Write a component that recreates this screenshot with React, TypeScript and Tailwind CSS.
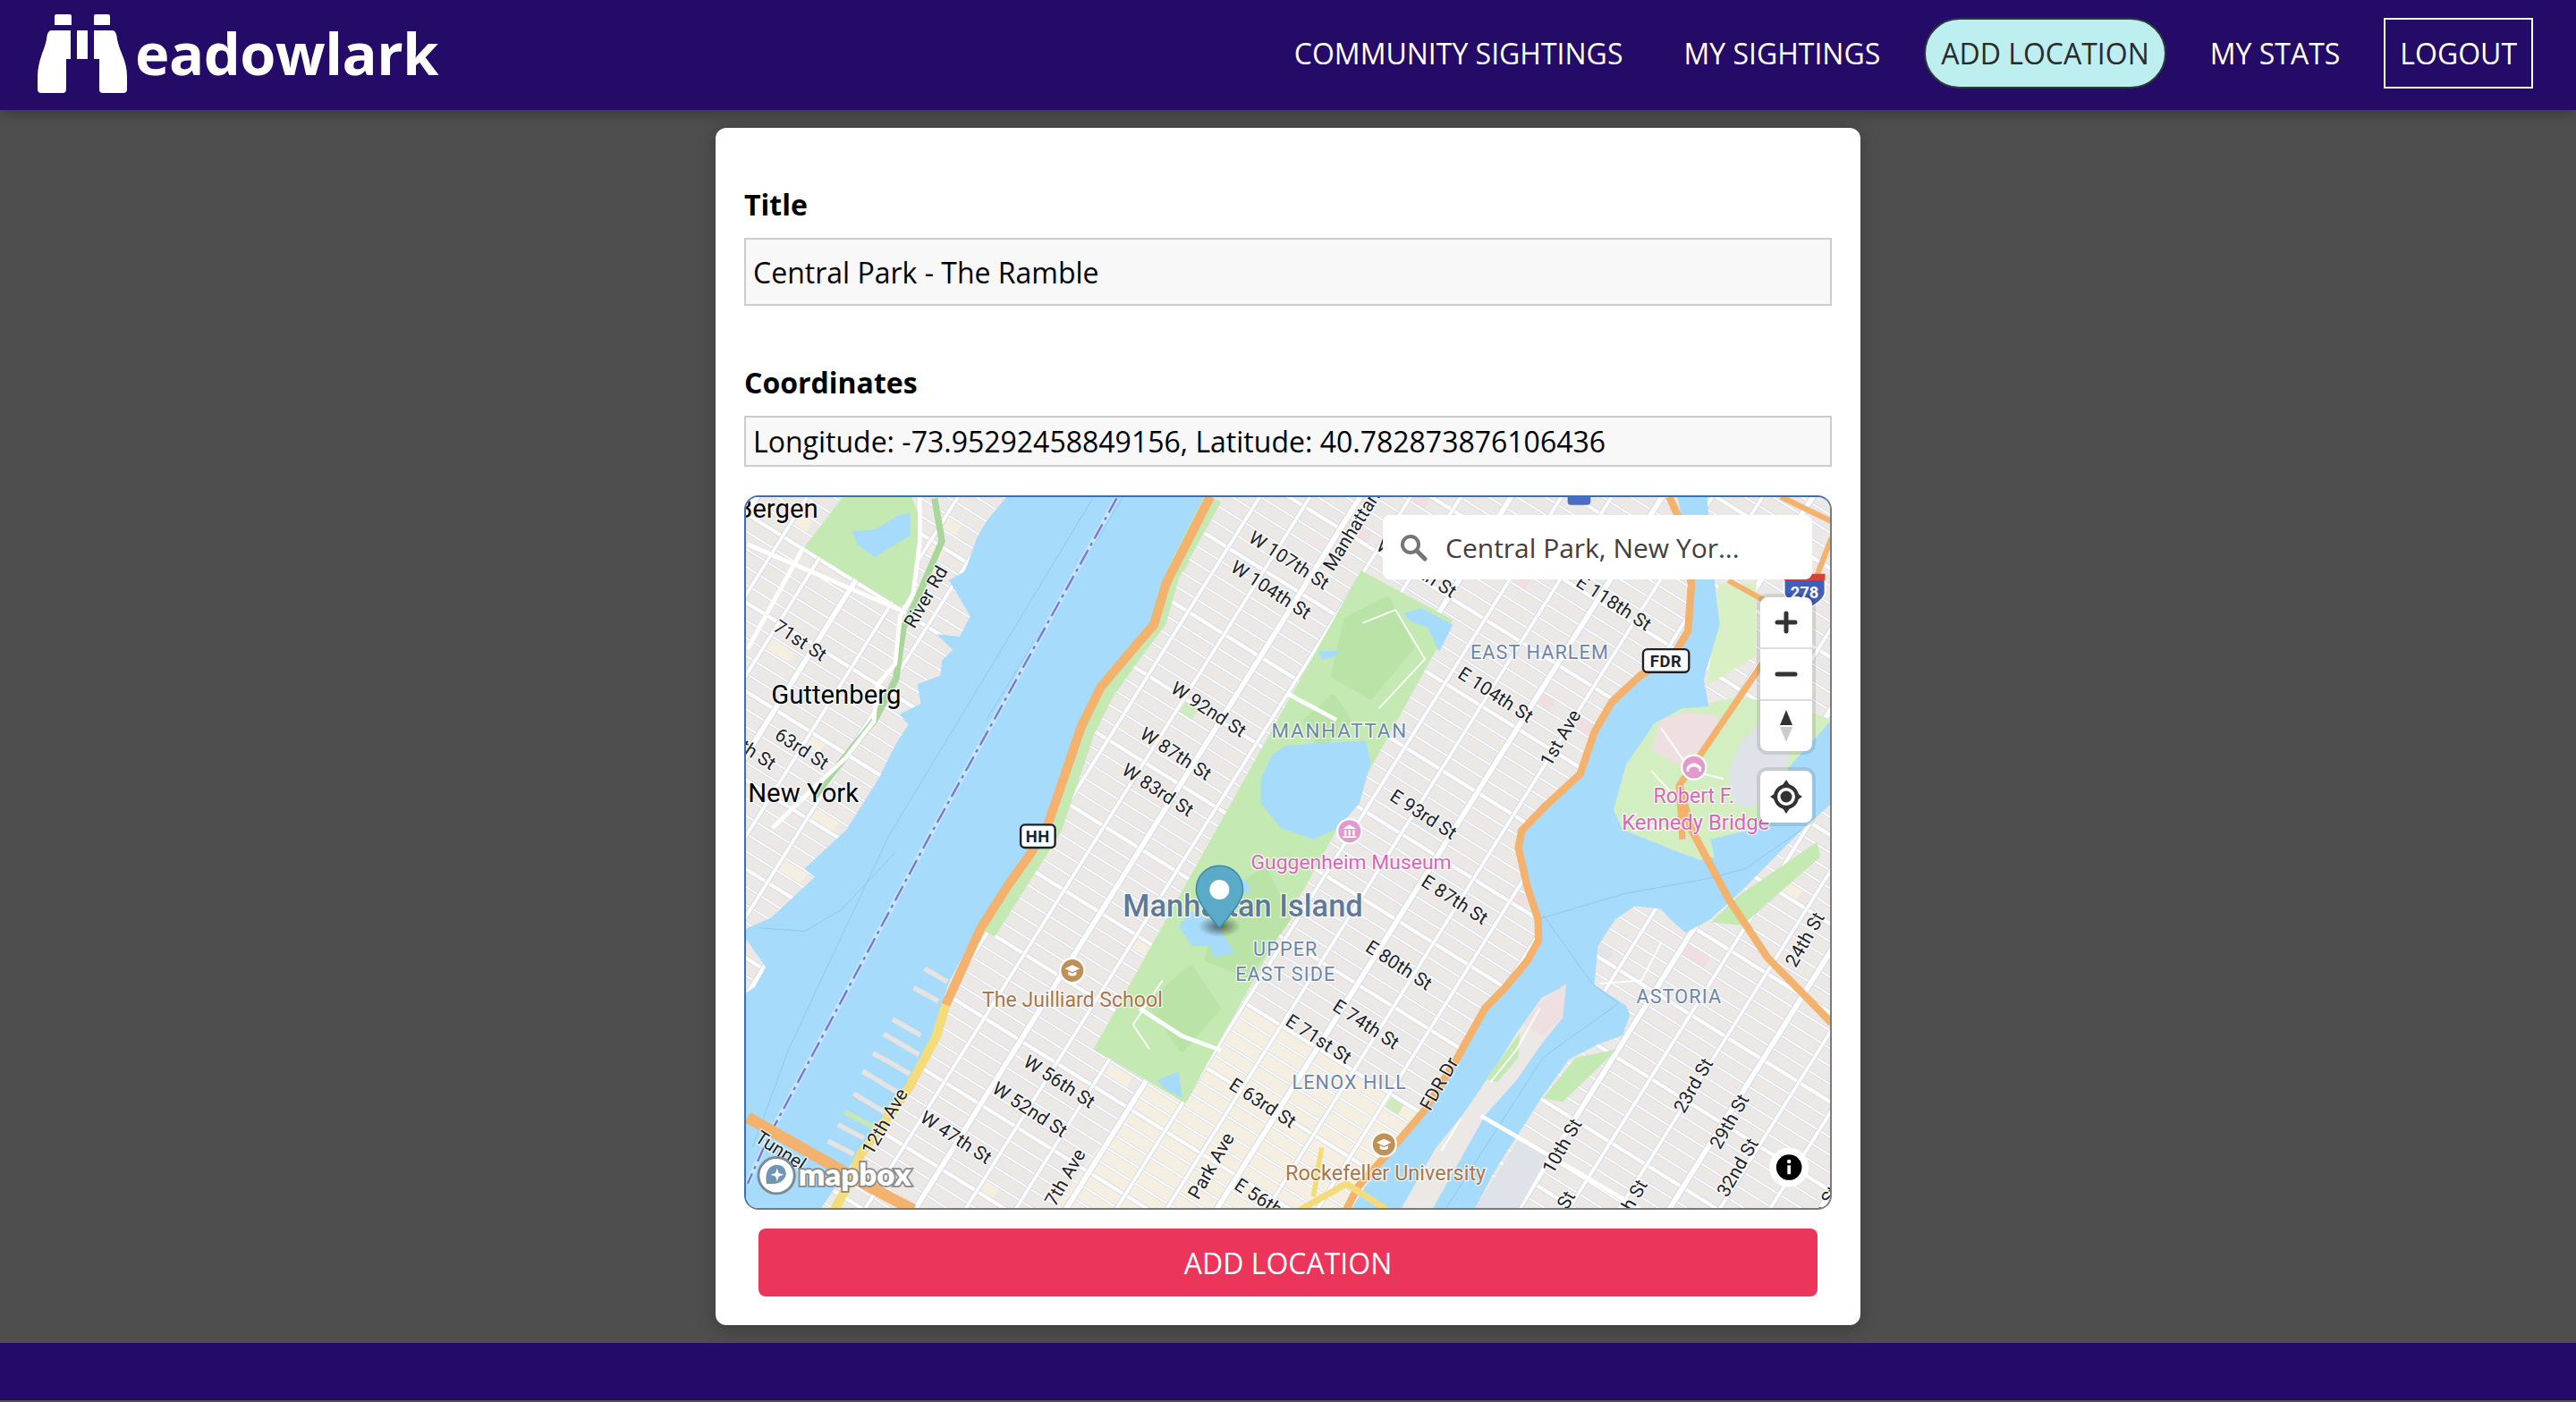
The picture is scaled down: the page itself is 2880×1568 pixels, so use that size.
import type { ReactNode } from "react";

const NAV_LINKS = [
  { label: "COMMUNITY SIGHTINGS", kind: "plain" },
  { label: "MY SIGHTINGS", kind: "plain" },
  { label: "ADD LOCATION", kind: "active" },
  { label: "MY STATS", kind: "plain" },
  { label: "LOGOUT", kind: "boxed" },
];

const HUDSON =
  "613,303 601.5,316.7 595,327.6 587.5,348.5 577.8,353.9 590.8,375.7 584.3,388.4 570.3,386.6 580,396.5 573.5,402.9 572.5,412 558.5,417.4 560.6,429.2 547.7,435.6 553,442 545.5,453.7 539,466.4 534.8,475.5 515.4,506 489.6,530 496,535 469,560 455,566 453,567 453,574 455,574 466,590 459.4,602 455,605 453,606 453,738 499,738 519.7,707.8 541.2,680.5 554,662.4 567,633 571.4,618.8 577.8,598.9 597.2,562.6 614.4,537 627.4,519 636,502.7 649,468.2 657.5,439 670.4,417.4 685.5,399.3 705,375.7 711.3,346.6 733,303";

const EAST_RIVER =
  "1022,303 1031.6,354 1029.5,385 1021,401 999.3,412 984,428.3 973.5,446.5 965,472 943,492 926,506 924,522.6 930.4,537 938,560.8 939,573.5 932.6,586 919.6,601.6 906.7,615 889.5,646 870,677 848.6,702.3 831.4,724 822.8,738 898,738 913,709.6 924,693.2 939,669.7 956,646 973.5,637 988.5,631.5 993,619 990.7,613.4 971.3,600.7 973.5,577 984,560.8 996,552.6 1012,554.4 1017.6,560.8 1027,569 1042,560.8 1061.7,542.6 1098,506 1116,490 1116,439 1089.7,468 1081,494 1064,506.7 1042,512 1044.5,522.6 1036,524.5 1021,519 988.5,506 983,493.7 990.7,466.4 1008,441 1025,432 1041,431 1038,414 1047.7,381 1044.5,354 1040,303";

const ROOSEVELT =
  "853,738 874.4,700.5 890.6,680.5 906.7,657 915.3,644 924,629.7 939,608.8 954,600.7 952,620.6 939,637 924,658.7 904.6,680.5 872.3,738";

const CENTRAL_PARK = "829,348 885,378 722,673 666,640";
const RESERVOIR = "783,455 805,453 832,452 835,465 828,490 815,505 800,512 780,505 768,490 768,475 775,460";
const PARK_PONDS = [
  "718,565 726,577 737,577 739,584 752,581 746,572 740,562 725,556",
  "705,659 717.7,653.3 720,670 709,664",
  "855,374 866,371 885,381 876.6,397.5 870,383 859,379",
  "803,397 816,397 812,401 805,402",
  "748,539 758,536 762,544 752,546",
];
const PARK_DARK = [
  "820,378 845,365 860,395 835,425 812,412",
  "795,440 812,425 822,440 805,455",
  "745,548 770,530 785,560 760,595 735,585",
  "700,612 725,590 742,615 720,640",
];
const GREENS = [
  { pts: "513,303 555,303 560.6,317.6 554,366.6 547.7,370 489.6,334", fill: "#c5e9b3" },
  { pts: "1047,356 1070,356 1070,400 1040,418 1044,385", fill: "#d8f0c4" },
  { pts: "1107,513.6 1109,522.6 1061.7,564.4 1042.4,562.6 1059.6,546", fill: "#c5e9b3" },
  { pts: "945,540 958,528 955,572 941,575", fill: "#c5e9b3" },
  { pts: "985,640 960,645 940,670 952,672 975,650", fill: "#c5e9b3" },
  { pts: "935,638 946,625 948,600 955,598 950,622 930,650", fill: "#c5e9b3" },
];

const WEST_SIDE_HWY = "737,303 710.2,355.7 702.7,381 685.5,401 670.4,419 658.5,443 650,468 638,503 627.4,520.8 614.4,539 597.2,566 575.7,613";
const HENRY_YELLOW = "575.7,613 570.3,631.5 554,662.4 541.2,680.5 524,704 515.4,724 508,738";
const FDR_HWY =
  "1017,303 1022,314 1030.5,356 1028.4,385 1018.7,401 999.3,412 982,428 971.3,446.5 962.7,472 941,492 927,506.6 925,517 930.4,540.8 937,560.8 937.3,573.5 930.4,586 917.5,601.6 904.6,615 887.3,646 868,677 846.4,702.3 827,724 820,738";
const RFK = "1023,479 1030.5,506 1053,548 1076.8,584 1116,624";
const RFK_UPPER = "1025,512 1023,479 1038,457.4 1072.5,406.5 1095,370";
const TOP_RIGHT_ROADS = ["1053,354 1072.5,365 1095,375", "1085,303 1116,318", "1116,328 1105,356"];
const WHITE_ROADS = [
  "560,303 560,330 556,362 548,376 545,405 534,418 532,440 515,462 494,482 470,505",
  "455,332 548,372",
  "489,334 468,372 455,396",
  "902,680.5 939,702 1000,738",
  "694,615 720,632 743.6,640.6",
  "784,423 814,439",
];
const THIN_ROADS = [
  "1012,444 1030,470 1050,475",
  "1006,470 1026,492",
  "990,500 1018,506",
  "938,615 924,640 908,660",
  "890,682 878,702",
  "708,598 690,625 700,640",
  "830,380 850,372 868,402 840,432",
  "975,600 1000,598 1012,575",
];

const PIERS = [
  "562.8,590.7 576.8,598.9",
  "556.3,602.5 571.4,610.7",
  "543.4,621.6 560.6,631.5",
  "538,630.6 559.5,643.3",
  "531.5,642.4 554,655",
  "525,653.3 547.7,667",
  "519.7,667 539,678.7",
  "510,686 526,694.2",
  "504,696 519.7,704",
];

type MapLabel = { t: string; x: number; y: number; r?: number; c?: string; s?: number; w?: number; ls?: number; a?: "start" | "end" };

const STREET_LABELS: MapLabel[] = [
  { t: "Bergen", x: 498, y: 316, s: 16, c: "#000", a: "end" },
  { t: "River Rd", x: 567, y: 366, r: -60 },
  { t: "71st St", x: 485, y: 394, r: 33 },
  { t: "Guttenberg", x: 509, y: 429, s: 16, c: "#000" },
  { t: "63rd St", x: 486, y: 460, r: 33 },
  { t: "67th St", x: 469, y: 470, r: 33, a: "end" },
  { t: "New York", x: 489, y: 489, s: 16, c: "#000" },
  { t: "W 107th St", x: 783, y: 345, r: 33 },
  { t: "W 104th St", x: 772, y: 363, r: 33 },
  { t: "Manhattan Ave", x: 812, y: 349, r: -58, a: "start" },
  { t: "W 116th St", x: 884, y: 365, r: 33, a: "end" },
  { t: "W 92nd St", x: 734, y: 436, r: 33 },
  { t: "W 87th St", x: 714, y: 463, r: 33 },
  { t: "W 83rd St", x: 703, y: 485, r: 33 },
  { t: "E 118th St", x: 981, y: 371, r: 33 },
  { t: "E 104th St", x: 909, y: 427, r: 33 },
  { t: "1st Ave", x: 954, y: 452, r: -60 },
  { t: "E 93rd St", x: 865, y: 500, r: 33 },
  { t: "E 87th St", x: 884, y: 552, r: 33 },
  { t: "E 80th St", x: 850, y: 592, r: 33 },
  { t: "E 74th St", x: 830, y: 628, r: 33 },
  { t: "E 71st St", x: 801, y: 637, r: 33 },
  { t: "W 56th St", x: 643, y: 663, r: 33 },
  { t: "W 52nd St", x: 625, y: 680, r: 33 },
  { t: "W 47th St", x: 580, y: 697, r: 33 },
  { t: "12th Ave", x: 542, y: 686, r: -60 },
  { t: "Tunnel", x: 473, y: 705, r: 33 },
  { t: "E 63rd St", x: 767, y: 676, r: 33 },
  { t: "Park Ave", x: 741, y: 713, r: -60 },
  { t: "7th Ave", x: 652, y: 720, r: -60 },
  { t: "E 56th St", x: 770, y: 737, r: 33 },
  { t: "FDR Dr", x: 880, y: 663, r: -60 },
  { t: "10th St", x: 955, y: 701, r: -60 },
  { t: "12th St", x: 951, y: 745, r: -60 },
  { t: "17th St", x: 995, y: 738, r: -60 },
  { t: "23rd St", x: 1035, y: 664, r: -60 },
  { t: "29th St", x: 1057, y: 686, r: -60 },
  { t: "32nd St", x: 1062, y: 714, r: -60 },
  { t: "24th St", x: 1103, y: 575, r: -60 },
  { t: "37th St", x: 1112, y: 742, r: -60 },
  { t: "The Juilliard School", x: 653, y: 614, c: "#a9774a", s: 12.6 },
  { t: "Rockefeller University", x: 844, y: 720, c: "#a9774a", s: 12.8 },
  { t: "Guggenheim Museum", x: 823, y: 530, c: "#d768b5", s: 12.5 },
  { t: "Robert F.", x: 1032, y: 490, c: "#d768b5", s: 12.6 },
  { t: "Kennedy Bridge", x: 1033, y: 506, c: "#d768b5", s: 13 },
  { t: "MANHATTAN", x: 816, y: 450, c: "#6d86a8", s: 12.2, ls: 1 },
  { t: "EAST HARLEM", x: 938, y: 402, c: "#6d86a8", s: 11.8, ls: 0.6 },
  { t: "UPPER", x: 783, y: 583, c: "#6d86a8", s: 11.8, ls: 0.6 },
  { t: "EAST SIDE", x: 783, y: 598, c: "#6d86a8", s: 11.8, ls: 0.6 },
  { t: "LENOX HILL", x: 822, y: 664, c: "#6d86a8", s: 11.8, ls: 0.6 },
  { t: "ASTORIA", x: 1023, y: 612, c: "#6d86a8", s: 11.8, ls: 0.6 },
  { t: "Manhattan Island", x: 757, y: 559, c: "#5f7a99", s: 18.8, w: 500 },
];

// block tints sit in the rotated street grid, picked with a small fixed sequence
function blockTints() {
  const out: ReactNode[] = [];
  let seed = 17;
  const colors = ["#f4efe0", "#cfeabb", "#f0dfe0", "#f4efe0", "#e2e4e8"];
  for (let i = 0; i < 110; i++) {
    seed = (seed * 137 + 59) % 1009;
    const col = seed % 37;
    seed = (seed * 137 + 59) % 1009;
    const row = seed % 61;
    const x = 785 + (col - 18) * 26 + 2;
    const y = 520 + (row - 30) * 9.2 + 1;
    out.push(<rect key={i} x={x} y={y} width={seed % 2 ? 9 : 16} height={7.5} fill={colors[seed % 5]} />);
  }
  return out;
}

function StreetGrid() {
  const streets = Array.from({ length: 101 }, (_, i) => i - 50);
  const avenues = Array.from({ length: 41 }, (_, i) => i - 20);
  return (
    <g transform="rotate(32 785 520)">
      {blockTints()}
      {streets.map((k) => {
        const y = 520 + k * 9.2;
        const major = k % 5 === 0;
        return (
          <g key={k}>
            <line x1={200} x2={1400} y1={y} y2={y} stroke="#d3d8e4" strokeWidth={major ? 3.2 : 1.7} />
            <line x1={200} x2={1400} y1={y} y2={y} stroke="#fff" strokeWidth={major ? 2.3 : 1} />
          </g>
        );
      })}
      {avenues.map((k) => {
        const x = 785 + k * 26;
        const major = k % 3 === 0;
        return (
          <g key={k}>
            <line y1={-100} y2={1100} x1={x} x2={x} stroke="#d3d8e4" strokeWidth={major ? 4.2 : 3} />
            <line y1={-100} y2={1100} x1={x} x2={x} stroke="#fff" strokeWidth={major ? 3.2 : 2.1} />
          </g>
        );
      })}
    </g>
  );
}

function PoiBadge({ x, y, fill, kind }: { x: number; y: number; fill: string; kind: "school" | "museum" | "bridge" }) {
  return (
    <g>
      <circle cx={x} cy={y} r={8} fill="#fff" />
      <circle cx={x} cy={y} r={6.8} fill={fill} />
      {kind === "school" && (
        <>
          <path d={`M${x - 4.5} ${y - 1.2} L${x} ${y - 3.4} L${x + 4.5} ${y - 1.2} L${x} ${y + 1} Z`} fill="#fff" />
          <path d={`M${x - 2.5} ${y + 0.6} V${y + 2.6} Q${x} ${y + 4} ${x + 2.5} ${y + 2.6} V${y + 0.6} L${x} ${y + 1.8} Z`} fill="#fff" />
        </>
      )}
      {kind === "museum" && (
        <path d={`M${x - 4} ${y - 1.5} L${x} ${y - 4} L${x + 4} ${y - 1.5} Z M${x - 3.2} ${y - 0.8} h1.3 v3.4 h-1.3 Z M${x - 0.65} ${y - 0.8} h1.3 v3.4 h-1.3 Z M${x + 1.9} ${y - 0.8} h1.3 v3.4 h-1.3 Z M${x - 4} ${y + 3} h8 v1 h-8 Z`} fill="#fff" />
      )}
      {kind === "bridge" && (
        <path d={`M${x - 4.5} ${y + 2.5} V${y} Q${x} ${y - 5} ${x + 4.5} ${y} V${y + 2.5} H${x + 3} V${y + 1} Q${x} ${y - 2} ${x - 3} ${y + 1} V${y + 2.5} Z`} fill="#fff" />
      )}
    </g>
  );
}

function RoadBadge({ x, y, w, label }: { x: number; y: number; w: number; label: string }) {
  return (
    <g>
      <rect x={x - w / 2} y={y - 7} width={w} height={14} rx={2.6} fill="#fff" stroke="#1c2128" strokeWidth={1.3} />
      <text x={x} y={y + 3.6} textAnchor="middle" fontFamily="Roboto, sans-serif" fontWeight={700} fontSize={10} letterSpacing={0.4} fill="#1c2128">
        {label}
      </text>
    </g>
  );
}

function MapDrawing() {
  return (
    <svg viewBox="454 303 661 434" preserveAspectRatio="xMidYMid slice" className="block h-full w-full">
      <defs>
        <radialGradient id="pinShadow">
          <stop offset="0%" stopColor="#000" stopOpacity="0.55" />
          <stop offset="100%" stopColor="#000" stopOpacity="0" />
        </radialGradient>
      </defs>
      <rect x={454} y={303} width={661} height={434} fill="#ebe8e5" />
      <polygon points="640,738 745,600 880,690 830,738" fill="#f4efe0" />
      <StreetGrid />

      {/* parks */}
      <polygon points={CENTRAL_PARK} fill="#c5e9b3" />
      {PARK_DARK.map((p) => (
        <polygon key={p} points={p} fill="#b9e3a7" strokeLinejoin="round" stroke="#b9e3a7" strokeWidth={3} />
      ))}
      {GREENS.map((g) => (
        <polygon key={g.pts} points={g.pts} fill={g.fill} />
      ))}
      <polyline points="738,303 712,350 704,378 686,402 672,422 660,446 652,470 640,505 628,524 600,568" fill="none" stroke="#c5e9b3" strokeWidth={13} />
      <polyline points="569,304 573.5,330 558.5,365 550,383 545.5,414 532.6,439 511,466 496,486" fill="none" stroke="#a9d69a" strokeWidth={4} />

      {/* Randall's island, sits above the grid */}
      <polygon points="1008,441 1025,432 1060,425 1090,430 1116,439 1089.7,468 1081,494 1064,506.7 1042,512 1044.5,522.6 1036,524.5 1021,519 988.5,506 983,493.7 990.7,466.4" fill="#d3efc1" />
      <polygon points="1012,439 1027,434 1047,437 1042,454 1021,466.4 1006,457" fill="#efdfe0" />
      <ellipse cx={1072} cy={466} rx={16} ry={28} fill="#dfe2e8" transform="rotate(25 1072 466)" />
      <polygon points="898,738 925,695 945,702 925,738" fill="#dfe2e8" />

      {/* water */}
      <polygon points={HUDSON} fill="#a7dbfb" />
      <polygon points={EAST_RIVER} fill="#a7dbfb" />
      <polygon points={RESERVOIR} fill="#a7dbfb" />
      {PARK_PONDS.map((p) => (
        <polygon key={p} points={p} fill="#a7dbfb" />
      ))}
      <polygon points="518.6,324 532.6,323 547.7,314 554,313 554,326.7 539,335.7 532.6,340 522,332" fill="#a7dbfb" />
      <polygon points={ROOSEVELT} fill="#ebe8e5" />
      <polygon points="954,600 952,620 940,632 928,625 940,610" fill="#efdfe0" />
      <polygon points="926,630 915,645 905,658 912,660 925,645" fill="#c5e9b3" />
      {PIERS.map((p) => (
        <polyline key={p} points={p} fill="none" stroke="#e6e3e0" strokeWidth={3} />
      ))}
      <polyline points="514,678 532.6,688" fill="none" stroke="#c5e9b3" strokeWidth={3} />

      {/* boat lanes */}
      <polyline points="666,303 541,510 480,640 458,700" fill="none" stroke="#8fc4f0" strokeWidth={0.5} />
      <polyline points="684,303 600,440" fill="none" stroke="#8fc4f0" strokeWidth={0.5} />
      <polyline points="462,566 490,568 512,555 545,520" fill="none" stroke="#8fc4f0" strokeWidth={0.5} />
      <polyline points="680,304 566,510 468,693 455,722" fill="none" stroke="#fff" strokeOpacity={0.35} strokeWidth={3} />
      <polyline points="680,304 566,510 468,693 455,722" fill="none" stroke="#7b77d4" strokeWidth={1.3} strokeDasharray="10 3 2 3" />
      <polyline points="939,560 990,545 1040,536 1063,530 1098,506" fill="none" stroke="#8fc4f0" strokeWidth={0.5} />
      <polyline points="940,558 970,600 986,612 940,645 880,738" fill="none" stroke="#8fc4f0" strokeWidth={0.5} />

      {/* roads */}
      {WHITE_ROADS.map((p) => (
        <polyline key={p} points={p} fill="none" stroke="#fff" strokeWidth={2.6} />
      ))}
      {THIN_ROADS.map((p) => (
        <polyline key={p} points={p} fill="none" stroke="#fff" strokeWidth={1} />
      ))}
      <polyline points="455,681.5 530,724 556,738" fill="none" stroke="#f3b26e" strokeWidth={7} />
      <polyline points={WEST_SIDE_HWY} fill="none" stroke="#f3b26e" strokeWidth={5.6} />
      <polyline points={HENRY_YELLOW} fill="none" stroke="#f4dc7a" strokeWidth={5.6} />
      <polyline points={FDR_HWY} fill="none" stroke="#f3b26e" strokeWidth={4.6} />
      <polyline points={RFK} fill="none" stroke="#f3b26e" strokeWidth={4.6} />
      <polyline points={RFK_UPPER} fill="none" stroke="#f3b26e" strokeWidth={4} />
      {TOP_RIGHT_ROADS.map((p) => (
        <polyline key={p} points={p} fill="none" stroke="#f3b26e" strokeWidth={3.4} />
      ))}
      <polyline points="792,738 820,722 845,738" fill="none" stroke="#f4dc7a" strokeWidth={4} />
      <polyline points="805,700 800,730" fill="none" stroke="#f4dc7a" strokeWidth={3} />

      {/* shields */}
      <path d="M1087 353 H1112 V362 Q1110 368 1099.5 372 Q1089 368 1087 362 Z" fill="#3f5fb8" stroke="#fff" />
      <path d="M1087 350 H1112 V354 H1087 Z" fill="#d8403a" />
      <text x={1099.5} y={365} textAnchor="middle" fontFamily="Roboto, sans-serif" fontWeight={700} fontSize={10} fill="#fff">278</text>
      <rect x={955} y={300} width={14} height={8} rx={2} fill="#4a6cc4" />
      <RoadBadge x={632} y={510} w={21} label="HH" />
      <RoadBadge x={1015} y={403} w={28} label="FDR" />

      {/* labels */}
      {STREET_LABELS.map((l) => (
        <text
          key={l.t + l.x}
          x={l.x}
          y={l.y}
          transform={l.r ? `rotate(${l.r} ${l.x} ${l.y})` : undefined}
          textAnchor={l.a ?? "middle"}
          fontFamily="Roboto, sans-serif"
          fontSize={l.s ?? 11.4}
          fontWeight={l.w ?? 400}
          letterSpacing={l.ls ?? 0}
          fill={l.c ?? "#20242a"}
          stroke="#fff"
          strokeOpacity={0.8}
          strokeWidth={1.4}
          paintOrder="stroke"
        >
          {l.t}
        </text>
      ))}
      <PoiBadge x={653} y={592} fill="#bf9158" kind="school" />
      <PoiBadge x={843} y={698} fill="#bf9158" kind="school" />
      <PoiBadge x={822} y={507} fill="#e29acd" kind="museum" />
      <PoiBadge x={1032} y={468} fill="#e29acd" kind="bridge" />

      {/* marker */}
      <ellipse cx={742.7} cy={565} rx={13} ry={6.5} fill="url(#pinShadow)" />
      <path d="M742.7 528 C734.5 528 728.5 534.5 728.5 543 C728.5 550 738 560 742.7 566 C747.5 560 757 550 757 543 C757 534.5 751 528 742.7 528 Z" fill="#5aaac8" stroke="#3f88a6" strokeWidth={0.8} />
      <circle cx={742.7} cy={542.6} r={6} fill="#fff" />

      {/* mapbox logo */}
      <circle cx={472.6} cy={717} r={11} fill="#fff" stroke="#7b8a94" strokeWidth={1.6} />
      <path d="M466.5 722 Q465 712 472 710.5 Q478 710 478.5 716 Q477 723 466.5 722 Z" fill="#6e97b5" />
      <path d="M473 712.5 L474 715.5 L477 716.5 L474 717.5 L473 720.5 L472 717.5 L469 716.5 L472 715.5 Z" fill="#fff" />
      <text x={486} y={723} fontFamily="Lato, sans-serif" fontWeight={800} fontSize={19} fill="#fff" stroke="#8a8a8a" strokeWidth={2} paintOrder="stroke">
        mapbox
      </text>

      {/* info button */}
      <circle cx={1090} cy={712} r={12} fill="#fff" />
      <circle cx={1090} cy={712} r={7.8} fill="#000" />
      <rect x={1089} y={710.8} width={2} height={5.4} fill="#fff" />
      <circle cx={1090} cy={708.4} r={1.2} fill="#fff" />
    </svg>
  );
}

function MapControls() {
  return (
    <>
      <div className="absolute left-[712px] top-[20px] flex h-[72px] w-[480px] items-center rounded-lg bg-white pl-[18px]">
        <svg width="32" height="32" viewBox="0 0 32 32" fill="none" stroke="#757575" strokeWidth="4">
          <circle cx="13" cy="13" r="9" />
          <path d="M20 20 L29 29" strokeLinecap="round" strokeWidth="5" />
        </svg>
        <span className="ml-[20px] text-[30px] text-[#404040]">Central Park, New Yor...</span>
      </div>
      <div className="absolute left-[1134px] top-[112px] flex w-[58px] flex-col divide-y-2 divide-[#ddd] rounded-lg bg-white shadow-[0_0_0_4px_rgba(0,0,0,0.1)]">
        <button className="flex h-[58px] items-center justify-center">
          <svg width="28" height="28" viewBox="0 0 28 28" stroke="#333" strokeWidth="5" strokeLinecap="round">
            <path d="M14 4 V24 M4 14 H24" />
          </svg>
        </button>
        <button className="flex h-[58px] items-center justify-center">
          <svg width="28" height="28" viewBox="0 0 28 28" stroke="#333" strokeWidth="5" strokeLinecap="round">
            <path d="M4 14 H24" />
          </svg>
        </button>
        <button className="flex h-[56px] items-center justify-center">
          <svg width="18" height="38" viewBox="0 0 18 38">
            <path d="M9 1 L16 18 H2 Z" fill="#333" />
            <path d="M9 37 L2 20 H16 Z" fill="#ccc" />
          </svg>
        </button>
      </div>
      <div className="absolute left-[1134px] top-[306px] flex h-[58px] w-[58px] items-center justify-center rounded-lg bg-white shadow-[0_0_0_4px_rgba(0,0,0,0.1)]">
        <svg width="36" height="42" viewBox="0 0 36 42" fill="none" stroke="#333">
          <circle cx="18" cy="21" r="12" strokeWidth="4" />
          <circle cx="18" cy="21" r="6.5" fill="#333" stroke="none" />
          <path d="M18 2 L14 8 H22 Z M18 40 L14 34 H22 Z M0 21 L6 17 V25 Z M36 21 L30 17 V25 Z" fill="#333" stroke="none" />
        </svg>
      </div>
    </>
  );
}

function Logo() {
  return (
    <svg width="100" height="88" viewBox="0 0 100 88" fill="#fff" className="shrink-0">
      <path d="M19 2 Q19 0 21 0 H36 Q38 0 38 2 V12 H19 Z" />
      <path d="M63 2 Q63 0 65 0 H79 Q81 0 81 2 V12 H63 Z" />
      <path d="M15 18 H37 V50 H32 V84 Q32 88 28 88 H4 Q0 88 0 84 V70 Q0 58 5 44 Q9 34 10 28 Q11 18 15 18 Z" />
      <path d="M63 18 H84 Q88 18 89 28 Q90 34 95 46 Q100 58 100 70 V84 Q100 88 96 88 H73 Q69 88 69 84 V50 H63 Z" />
      <rect x="44" y="18" width="12" height="32" />
    </svg>
  );
}

export default function App() {
  return (
    <div className="flex min-h-[1568px] flex-col bg-[#4e4e4e] font-['Open_Sans',sans-serif] text-black">
      <nav className="relative z-10 flex h-[123px] items-center justify-between bg-[#240b68] pb-[4px] pl-[42px] pr-[48px] shadow-[0_4px_14px_rgba(0,0,0,0.25)]">
        <div className="flex items-center">
          <Logo />
          <span className="ml-[9px] text-[65px] font-bold leading-none tracking-[-0.5px] text-white">eadowlark</span>
        </div>
        <ul className="flex items-center gap-[30px]">
          {NAV_LINKS.map((link) => (
            <li
              key={link.label}
              className={
                link.kind === "active"
                  ? "flex h-[79px] items-center rounded-[40px] border-2 border-[#2e3a3a] bg-[#bdeef0] px-[17px] text-[32px] text-[#2b2b2b]"
                  : link.kind === "boxed"
                    ? "flex h-[79px] items-center border-2 border-white px-[16px] text-[32px] text-white"
                    : "flex h-[79px] items-center px-[19px] text-[32px] text-white"
              }
            >
              {link.label}
            </li>
          ))}
        </ul>
      </nav>

      <main className="flex flex-1 justify-center py-[20px]">
        <div className="flex w-[1280px] flex-col rounded-xl bg-white px-8 shadow-[0_4px_20px_rgba(0,0,0,0.25)]">
          <label className="mt-[64px] mb-[15px] text-[32px] font-bold leading-[44px]">Title</label>
          <div className="flex h-[76px] items-center border-2 border-[#ccc] bg-[#f8f8f8] px-2 pt-[2px] text-[32px]">Central Park - The Ramble</div>
          <label className="mt-[64px] mb-[15px] text-[32px] font-bold leading-[44px]">Coordinates</label>
          <div className="flex h-[57px] items-center border-2 border-[#ccc] bg-[#f8f8f8] px-2 text-[32px]">
            Longitude: -73.95292458849156, Latitude: 40.782873876106436
          </div>
          <div className="relative mt-[32px] h-[799px] overflow-hidden rounded-2xl border-2 border-t-[#3a6fb5] border-r-[#7a7a7a] border-b-[#7a7a7a] border-l-[#3a6fb5]">
            <MapDrawing />
            <MapControls />
          </div>
          <button className="mx-4 mt-[21px] h-[76px] rounded-lg bg-[#ec355b] pt-[2px] text-[32px] text-white">ADD LOCATION</button>
        </div>
      </main>

      <footer className="mb-[2px] h-[64px] bg-[#240b68]" />
    </div>
  );
}
